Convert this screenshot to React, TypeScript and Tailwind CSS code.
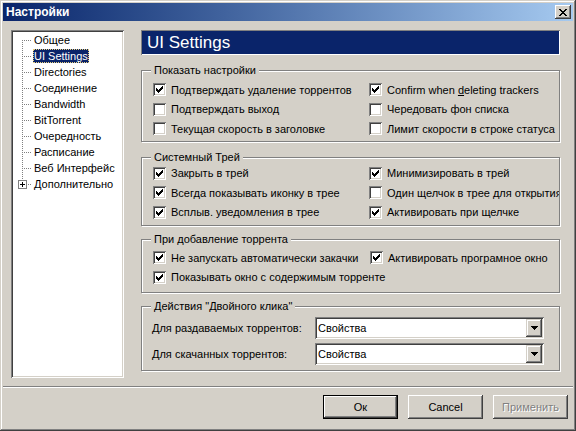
import React from "react";

const font = "font-['Liberation_Sans','Noto_Sans',sans-serif]";

function Check({ on }: { on: boolean }) {
  // classic 13x13 sunken box with the pixel check mark
  return (
    <span className="w-[13px] h-[13px] shrink-0 bg-white shadow-[inset_1px_1px_0_#808080,inset_-1px_-1px_0_#fff,inset_2px_2px_0_#404040,inset_-2px_-2px_0_#d4d0c8] flex">
      {on && (
        <svg width="13" height="13" viewBox="0 0 13 13" shapeRendering="crispEdges">
          <rect x="3" y="5" width="1" height="3" fill="#000" />
          <rect x="4" y="6" width="1" height="3" fill="#000" />
          <rect x="5" y="7" width="1" height="3" fill="#000" />
          <rect x="6" y="6" width="1" height="3" fill="#000" />
          <rect x="7" y="5" width="1" height="3" fill="#000" />
          <rect x="8" y="4" width="1" height="3" fill="#000" />
          <rect x="9" y="3" width="1" height="3" fill="#000" />
        </svg>
      )}
    </span>
  );
}

function Opt({ on, label, underline }: { on: boolean; label: string; underline?: number }) {
  return (
    <div className="h-[19.5px] flex items-center gap-[5px] whitespace-nowrap overflow-hidden">
      <Check on={on} />
      <span>
        {underline === undefined ? (
          label
        ) : (
          <>
            {label.slice(0, underline)}
            <span className="underline">{label[underline]}</span>
            {label.slice(underline + 1)}
          </>
        )}
      </span>
    </div>
  );
}

function Group({ title, className, children }: { title: string; className: string; children: React.ReactNode }) {
  return (
    <div className={`relative border border-[#808080] shadow-[inset_1px_1px_0_#fff,1px_1px_0_#fff] ${className}`}>
      <span className="absolute -top-[8px] left-[9px] px-[3px] bg-[#d4d0c8] leading-[14px]">{title}</span>
      {children}
    </div>
  );
}

function Combo({ value }: { value: string }) {
  return (
    <div className="w-[229px] h-[22px] bg-white flex items-center justify-between pl-[3px] pr-[2px] shadow-[inset_1px_1px_0_#808080,inset_-1px_-1px_0_#fff,inset_2px_2px_0_#404040,inset_-2px_-2px_0_#d4d0c8]">
      <span>{value}</span>
      <span className="w-[16px] h-[18px] bg-[#d4d0c8] flex items-center justify-center shadow-[inset_-1px_-1px_0_#404040,inset_1px_1px_0_#d4d0c8,inset_-2px_-2px_0_#808080,inset_2px_2px_0_#fff]">
        <svg width="7" height="4" viewBox="0 0 7 4" shapeRendering="crispEdges">
          <path d="M0 0h7v1H0zM1 1h5v1H1zM2 2h3v1H2zM3 3h1v1H3z" fill="#000" />
        </svg>
      </span>
    </div>
  );
}

const treeItems = [
  "Общее",
  "UI Settings",
  "Directories",
  "Соединение",
  "Bandwidth",
  "BitTorrent",
  "Очередность",
  "Расписание",
  "Веб Интерфейс",
  "Дополнительно",
];

function TreeLines({ first, last }: { first: boolean; last: boolean }) {
  const dots = [];
  const y0 = first ? 8 : 0;
  for (let y = y0; y < 16; y += 2) dots.push(<rect key={"v" + y} x="9" y={y} width="1" height="1" fill="#808080" />);
  for (let x = 11; x < 19; x += 2) dots.push(<rect key={"h" + x} x={x} y="8" width="1" height="1" fill="#808080" />);
  return (
    <svg width="20" height="16" viewBox="0 0 20 16" shapeRendering="crispEdges" className="shrink-0">
      {!last && dots}
      {last && (
        <>
          {[0, 2].map((y) => (
            <rect key={y} x="9" y={y} width="1" height="1" fill="#808080" />
          ))}
          <rect x="5.5" y="4.5" width="8" height="8" fill="#fff" stroke="#808080" shapeRendering="crispEdges" />
          <rect x="7" y="8" width="5" height="1" fill="#000" />
          <rect x="9" y="6" width="1" height="5" fill="#000" />
          <rect x="15" y="8" width="1" height="1" fill="#808080" />
          <rect x="17" y="8" width="1" height="1" fill="#808080" />
        </>
      )}
    </svg>
  );
}

function Btn({ label, def, disabled }: { label: string; def?: boolean; disabled?: boolean }) {
  const frame = def
    ? "shadow-[inset_0_0_0_1px_#000,inset_-2px_-2px_0_#404040,inset_2px_2px_0_#fff,inset_-3px_-3px_0_#808080]"
    : "shadow-[inset_-1px_-1px_0_#404040,inset_1px_1px_0_#fff,inset_-2px_-2px_0_#808080]";
  return (
    <div className={`w-[75px] h-[24px] flex items-center justify-center bg-[#d4d0c8] ${frame}`}>
      <span className={disabled ? "text-[#808080] [text-shadow:1px_1px_0_#fff]" : ""}>{label}</span>
    </div>
  );
}

export default function App() {
  return (
    <div className={`${font} text-[11px] text-black w-[576px] h-[431px] bg-[#d4d0c8] p-[3px] flex flex-col shadow-[inset_-1px_-1px_0_#404040,inset_1px_1px_0_#d4d0c8,inset_-2px_-2px_0_#808080,inset_2px_2px_0_#fff] overflow-hidden`}>
      {/* Title bar */}
      <div className="h-[18px] shrink-0 flex items-center justify-between pl-[3px] pr-[2px] bg-gradient-to-r from-[#0a246a] to-[#a6caf0]">
        <span className="text-white font-bold text-[12px]">Настройки</span>
        <span className="w-[16px] h-[14px] bg-[#d4d0c8] flex items-center justify-center shadow-[inset_-1px_-1px_0_#404040,inset_1px_1px_0_#fff,inset_-2px_-2px_0_#808080]">
          <svg width="8" height="7" viewBox="0 0 8 7" shapeRendering="crispEdges">
            <path d="M0 0h2v1H0zM6 0h2v1H6zM1 1h2v1H1zM5 1h2v1H5zM2 2h4v1H2zM3 3h2v1H3zM2 4h4v1H2zM1 5h2v1H1zM5 5h2v1H5zM0 6h2v1H0zM6 6h2v1H6z" fill="#000" />
          </svg>
        </span>
      </div>

      {/* Main */}
      <div className="flex pt-[9px] pl-[8px]">
        {/* Tree */}
        <div className="w-[113px] h-[348px] shrink-0 bg-white shadow-[inset_1px_1px_0_#808080,inset_-1px_-1px_0_#fff,inset_2px_2px_0_#404040,inset_-2px_-2px_0_#d4d0c8] pt-[2px] pl-[2px]">
          {treeItems.map((t, i) => (
            <div key={t} className="h-[16px] flex items-center">
              <TreeLines first={i === 0} last={i === treeItems.length - 1} />
              <span
                className={
                  i === 1
                    ? "bg-[#0a246a] text-white px-[1px] leading-[14px] outline outline-1 outline-dotted outline-[#e8d080] -outline-offset-1"
                    : "px-[1px] leading-[14px]"
                }
              >
                {t}
              </span>
            </div>
          ))}
        </div>

        {/* Right column */}
        <div className="w-[419px] ml-[17px] flex flex-col">
          <div className="h-[25px] bg-[#0a246a] flex items-center pl-[6px] shadow-[inset_1px_1px_0_#808080,inset_-1px_-1px_0_#fff]">
            <span className="text-white text-[17px]">UI Settings</span>
          </div>

          <Group title="Показать настройки" className="mt-[15px] pt-[9px] pb-[2px] pl-[11px]">
            <div className="grid grid-cols-[216px_1fr]">
              <Opt on label="Подтверждать удаление торрентов" />
              <Opt on label="Confirm when deleting trackers" underline={13} />
              <Opt on={false} label="Подтверждать выход" />
              <Opt on={false} label="Чередовать фон списка" />
              <Opt on={false} label="Текущая скорость в заголовке" />
              <Opt on={false} label="Лимит скорости в строке статуса" />
            </div>
          </Group>

          <Group title="Системный Трей" className="mt-[15px] pt-[6px] pb-[3px] pl-[11px]">
            <div className="grid grid-cols-[216px_1fr]">
              <Opt on label="Закрыть в трей" />
              <Opt on label="Минимизировать в трей" />
              <Opt on label="Всегда показывать иконку в трее" />
              <Opt on={false} label="Один щелчок в трее для открытия" />
              <Opt on label="Всплыв. уведомления в трее" />
              <Opt on label="Активировать при щелчке" />
            </div>
          </Group>

          <Group title="При добавление торрента" className="mt-[13px] pt-[8px] pb-[5px] pl-[11px]">
            <div className="grid grid-cols-[217px_1fr]">
              <Opt on label="Не запускать автоматически закачки" />
              <Opt on label="Активировать програмное окно" />
            </div>
            <Opt on label="Показывать окно с содержимым торренте" />
          </Group>

          <Group title={'Действия "Двойного клика"'} className="mt-[13px] pt-[10px] pb-[5px] pl-[10px]">
            <div className="flex items-center">
              <span className="w-[163px]">Для раздаваемых торрентов:</span>
              <Combo value="Свойства" />
            </div>
            <div className="flex items-center mt-[4px]">
              <span className="w-[163px]">Для скачанных торрентов:</span>
              <Combo value="Свойства" />
            </div>
          </Group>
        </div>
      </div>

      {/* Separator */}
      <div className="mt-[8px] border-t border-[#808080] border-b border-b-white" />

      {/* Buttons */}
      <div className="flex justify-end gap-[10px] mt-[7px] pr-[5px]">
        <Btn label="Ок" def />
        <Btn label="Cancel" />
        <Btn label="Применить" disabled />
      </div>
    </div>
  );
}
